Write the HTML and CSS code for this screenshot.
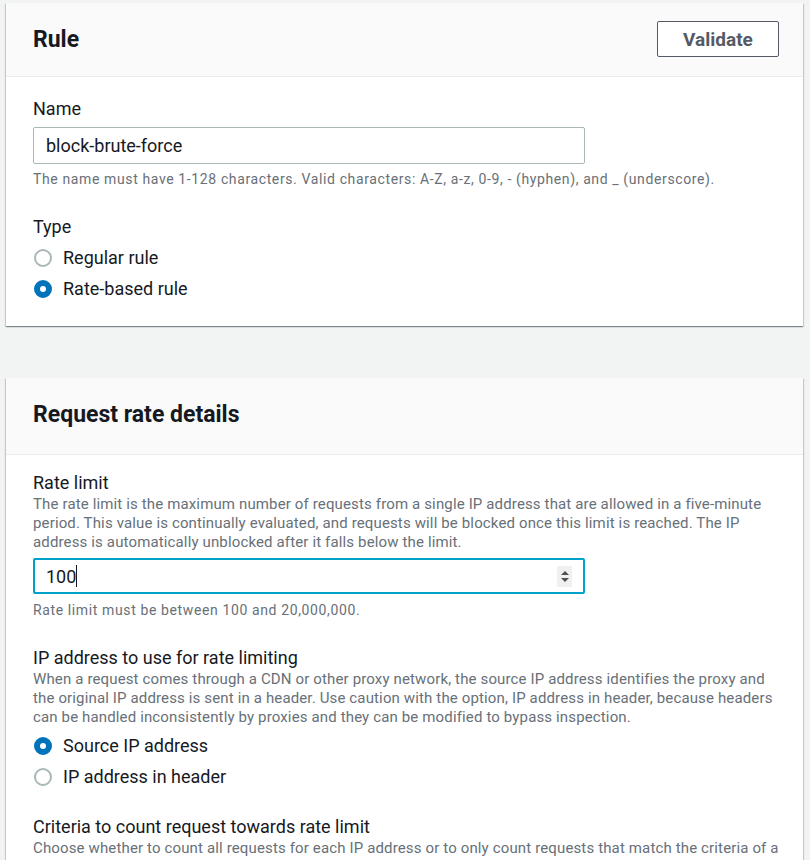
FILE: index.html
```html
<!DOCTYPE html>
<html lang="en">
<head>
<meta charset="utf-8">
<title>Rule</title>
<link rel="stylesheet" href="styles.css">
</head>
<body>
<main class="page">
  <section class="card">
    <header class="card-header">
      <h2 class="card-title">Rule</h2>
      <button class="btn" type="button">Validate</button>
    </header>
    <div class="card-body">
      <div class="field">
        <label class="label">Name</label>
        <div class="input">block-brute-force</div>
        <p class="hint">The name must have 1-128 characters. Valid characters: A-Z, a-z, 0-9, - (hyphen), and _ (underscore).</p>
      </div>
      <div class="field field-type">
        <div class="label">Type</div>
        <div class="radios">
          <div class="radio"><span class="dot"></span><span>Regular rule</span></div>
          <div class="radio"><span class="dot checked"></span><span>Rate-based rule</span></div>
        </div>
      </div>
    </div>
  </section>

  <section class="card">
    <header class="card-header card-header-plain">
      <h2 class="card-title">Request rate details</h2>
    </header>
    <div class="card-body card-body-2">
      <div class="field">
        <div class="label">Rate limit</div>
        <p class="desc">The rate limit is the maximum number of requests from a single IP address that are allowed in a five-minute period. This value is continually evaluated, and requests will be blocked once this limit is reached. The IP address is automatically unblocked after it falls below the limit.</p>
        <div class="input input-focus"><span class="value">100</span><span class="caret"></span>
          <span class="spinner"><span class="up"></span><span class="down"></span></span>
        </div>
        <p class="hint hint-after-focus">Rate limit must be between 100 and 20,000,000.</p>
      </div>
      <div class="field field-ip">
        <div class="label">IP address to use for rate limiting</div>
        <p class="desc">When a request comes through a CDN or other proxy network, the source IP address identifies the proxy and the original IP address is sent in a header. Use caution with the option, IP address in header, because headers can be handled inconsistently by proxies and they can be modified to bypass inspection.</p>
        <div class="radios radios-tight">
          <div class="radio"><span class="dot checked"></span><span>Source IP address</span></div>
          <div class="radio"><span class="dot"></span><span>IP address in header</span></div>
        </div>
      </div>
      <div class="field field-criteria">
        <div class="label">Criteria to count request towards rate limit</div>
        <p class="desc">Choose whether to count all requests for each IP address or to only count requests that match the criteria of a scope-down statement.</p>
      </div>
    </div>
  </section>
</main>
</body>
</html>
```

FILE: styles.css
```css
* { box-sizing: border-box; }
html, body { margin: 0; padding: 0; }
body {
  background: #f2f3f3;
  font-family: Roboto, "Liberation Sans", Arial, sans-serif;
  color: #16191f;
}
.page {
  padding: 3px 7px 0 6px;
  display: flex;
  flex-direction: column;
  gap: 52px;
}
.card {
  background: #ffffff;
  box-shadow: 0 1px 1px 0 rgba(0,28,36,0.3), 1px 1px 1px 0 rgba(0,28,36,0.15), -1px 1px 1px 0 rgba(0,28,36,0.15);
}
.card-header {
  background: #fafafa;
  border-bottom: 1px solid #eaeded;
  padding: 18px 24px 19px 27px;
  display: flex;
  align-items: center;
  justify-content: space-between;
}
.card-header-plain { padding: 21px 27px 23px; }
.card-title {
  margin: 0;
  font-size: 23px;
  font-weight: 700;
  line-height: 32px;
  padding-top: 1px;
}
.card-header-plain .card-title { padding-top: 0; }
.btn {
  font-family: inherit;
  background: #fff;
  border: 1px solid #545b64;
  border-radius: 2px;
  color: #545b64;
  font-size: 19px;
  font-weight: 700;
  height: 36px;
  width: 122px;
  padding: 0;
}
.card-body { padding: 21px 22px 25px 27px; }
.card-body-2 { padding-top: 17px; }
.label {
  display: block;
  font-size: 18px;
  line-height: 22px;
}
.input {
  position: relative;
  width: 552px;
  height: 37px;
  margin-top: 7px;
  border: 1px solid #aab7b8;
  border-radius: 2px;
  padding: 0 12px;
  display: flex;
  align-items: center;
  font-size: 18px;
}
.input-focus {
  border: 2px solid #00a1c9;
  height: 36px;
  margin-top: 6px;
  padding: 0 11px;
}
.caret {
  display: inline-block;
  width: 1px;
  height: 22px;
  background: #16191f;
}
.spinner {
  position: absolute;
  right: 11px;
  top: 6px;
  width: 15px;
  height: 21px;
  background: #f0f0f0;
  display: flex;
  flex-direction: column;
  align-items: center;
  justify-content: center;
  gap: 3px;
}
.spinner .up {
  width: 0; height: 0;
  border-left: 4px solid transparent;
  border-right: 4px solid transparent;
  border-bottom: 4px solid #505050;
}
.spinner .down {
  width: 0; height: 0;
  border-left: 4px solid transparent;
  border-right: 4px solid transparent;
  border-top: 4px solid #505050;
}
.hint {
  margin: 6px 0 0;
  font-size: 14px;
  line-height: 19px;
  letter-spacing: 0.62px;
  color: #687078;
}
.hint-after-focus { margin-top: 7px; }
.desc {
  margin: 1px 0 0;
  font-size: 15px;
  line-height: 19px;
  letter-spacing: 0.14px;
  color: #687078;
}
.field-type { margin-top: 27px; }
.field-ip { margin-top: 27px; }
.field-criteria { margin-top: 27px; }
.radios {
  display: flex;
  flex-direction: column;
  gap: 7px;
  margin-top: 8px;
}
.radios-tight { margin-top: 7px; }
.radio {
  display: flex;
  align-items: center;
  gap: 11px;
  font-size: 18px;
  line-height: 24px;
}
.dot {
  width: 18px;
  height: 18px;
  margin-left: 1px;
  border-radius: 50%;
  border: 2px solid #aab7b8;
  background: #fff;
  flex: none;
}
.dot.checked {
  border: 6px solid #0073bb;
}
```
